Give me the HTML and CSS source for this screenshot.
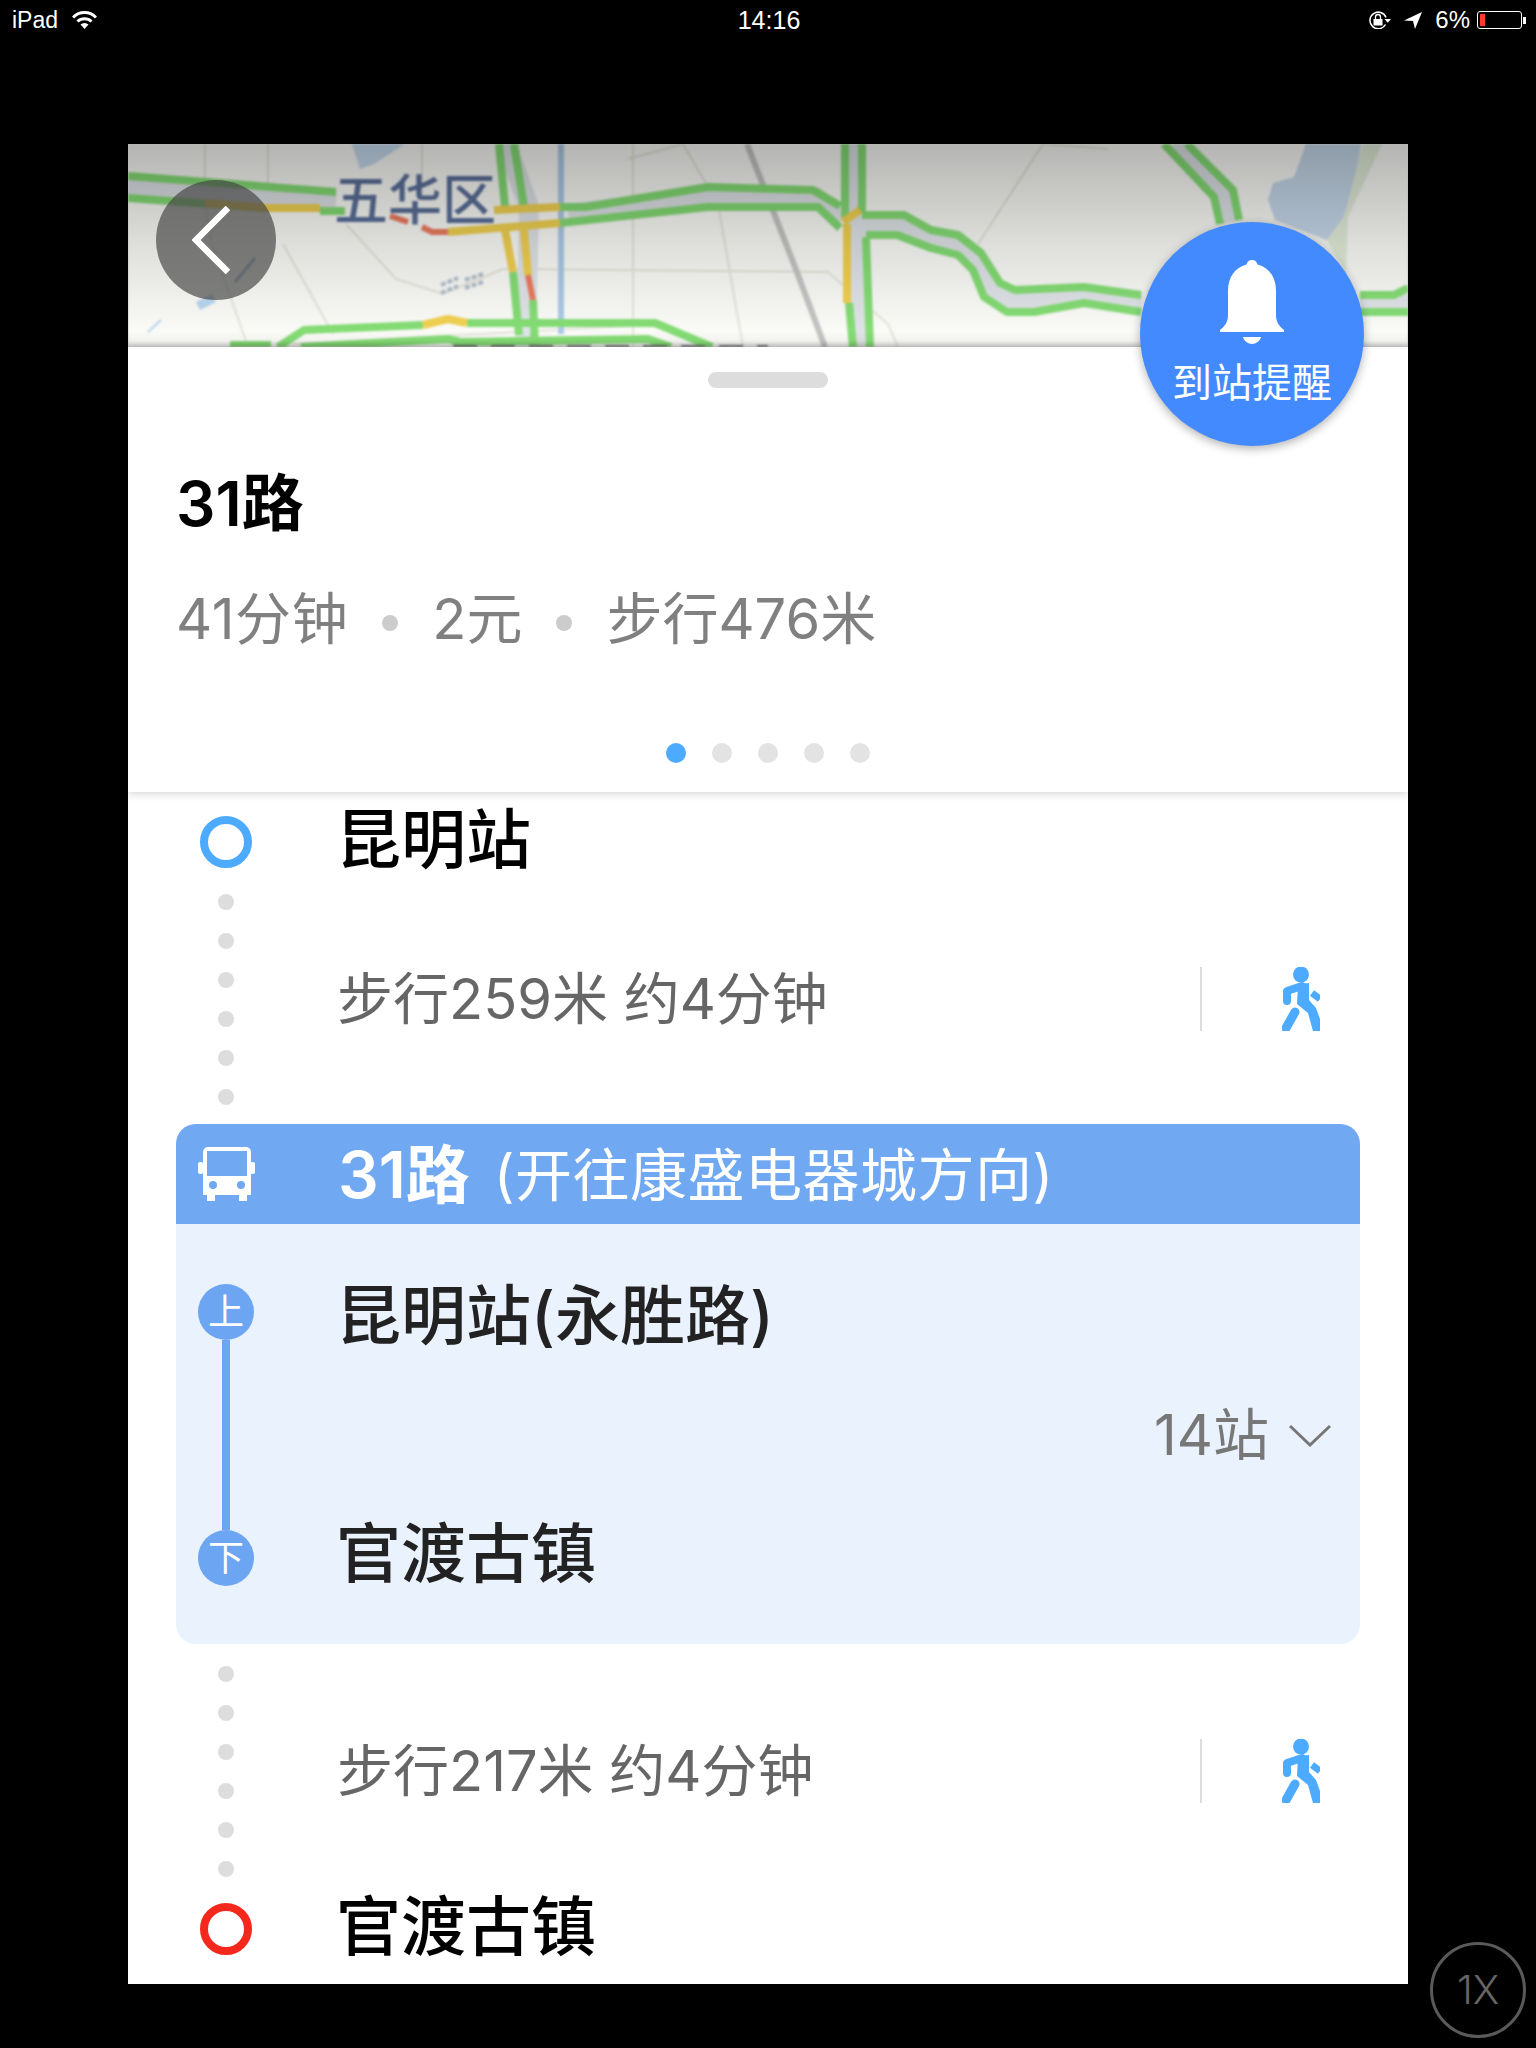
FILE: index.html
```html
<!DOCTYPE html>
<html lang="zh-CN">
<head>
    <meta charset="UTF-8">
    <meta name="viewport" content="width=device-width, initial-scale=1.0">
    <title>31路</title>
    <link rel="stylesheet" href="styles.css">
</head>
<body>
    <div class="status-bar">
        <div class="status-left">
            <span>iPad</span>
            <svg class="wifi-icon" width="25" height="18" viewBox="0 0 25 18">
                <path d="M1 6.500a16 16 0 0 1 23 0" fill="none" stroke="#fff" stroke-width="3"/>
                <path d="M5.500 10.500a10 10 0 0 1 14 0" fill="none" stroke="#fff" stroke-width="3"/>
                <path d="M8.500 13.500a6 6 0 0 1 8 0L12.500 18z" fill="#fff"/>
            </svg>
        </div>
        <div class="status-time">14:16</div>
        <div class="status-right">
            <svg width="22" height="18" viewBox="0 0 22 18">
                <path d="M16.500 13.500A8.300 8.300 0 1 1 17 6.500" fill="none" stroke="#fff" stroke-width="1.500"/>
                <path d="M15.500 8h6.500l-3.200 3.800z" fill="#fff"/>
                <rect x="4.500" y="8" width="9" height="6.500" fill="#fff"/>
                <path d="M6.500 8V6a2.500 2.500 0 0 1 5 0v2" fill="none" stroke="#fff" stroke-width="1.300"/>
            </svg>
            <svg class="arrow-icon" width="18" height="17" viewBox="0 0 18 17">
                <path d="M18 0L0 8.500l9 .5 2 8z" fill="#fff"/>
            </svg>
            <span class="battery-pct">6%</span>
            <div class="battery"><div class="battery-fill"></div></div>
            <div class="battery-nub"></div>
        </div>
    </div>

    <div class="screen">
        <div class="map">
            <svg class="map-svg" width="1280" height="203" viewBox="0 0 1280 203">
                <defs>
                    <linearGradient id="mapShade" x1="0" y1="0" x2="0" y2="1">
                        <stop offset="0" stop-color="#000" stop-opacity="0.28"/>
                        <stop offset="0.5" stop-color="#000" stop-opacity="0.11"/>
                        <stop offset="0.92" stop-color="#000" stop-opacity="0"/>
                        <stop offset="0.97" stop-color="#000" stop-opacity="0.03"/>
                        <stop offset="1" stop-color="#000" stop-opacity="0.22"/>
                    </linearGradient>
                </defs>
                <rect width="1280" height="203" fill="#fafaf7"/>

                <!-- water -->
                <path d="M1178 0H1233L1228 33L1216 73L1199 96L1147 76L1140 56L1145 39L1166 33z" fill="#c6d8ea"/>
                <path d="M1235 0H1254L1220 73L1218 129L1199 96L1216 73z" fill="#e2edd9"/>
                <path d="M224 0L232 25L246 20L277 0z" fill="#c6dbee"/>
                <path d="M68 158L84 150L88 158L72 166z" fill="#b8d6ee"/>
                <path d="M20 188L33 176" stroke="#b8d6ee" stroke-width="2" fill="none"/>
                <path d="M107 138L127 114" stroke="#7da2c4" stroke-width="2" fill="none"/>

                <!-- thin roads -->
                <g fill="none" stroke="#e4e4da" stroke-width="2">
                    <path d="M77 0V60L84 100L120 203"/>
                    <path d="M140 0V60"/>
                    <path d="M155 100L205 190"/>
                    <path d="M218 80L268 135L315 150L375 125L700 128L760 180L770 203"/>
                    <path d="M294 0V50"/>
                    <path d="M505 0V203"/>
                    <path d="M500 15L555 0L590 60L615 203"/>
                    <path d="M850 100L915 0L980 5"/>
                    <path d="M165 200L500 182"/>
                </g>

                <!-- rail -->
                <path d="M619 0L667 123L697 203" fill="none" stroke="#c4c4c4" stroke-width="6"/>
                <path d="M433 0V190" fill="none" stroke="#acc9e6" stroke-width="6"/>

                <!-- road beds -->
                <g fill="none" stroke="#dfe3e7" stroke-width="20">
                    <path d="M0 43L208 58"/>
                    <path d="M378 0L401 63L398 203"/>
                    <path d="M440 70L580 53L688 54L715 75"/>
                    <path d="M725 0L731 203"/>
                    <path d="M734 81L776 82L803 95L830 101L849 118L864 146L883 157L956 151L1013 160"/>
                    <path d="M1232 160H1280"/>
                    <path d="M1047 0L1095 50L1102 78"/>
                </g>

                <!-- green traffic -->
                <g fill="none" stroke="#84dc74" stroke-width="8" stroke-linejoin="round">
                    <path d="M0 32L208 48"/>
                    <path d="M0 54L139 64"/>
                    <path d="M192 67H217"/>
                    <path d="M371 0L377 63"/>
                    <path d="M386 0L396 63"/>
                    <path d="M385 128L391 191"/>
                    <path d="M405 156L407 203"/>
                    <path d="M432 63H458L580 43L685 46L712 62"/>
                    <path d="M432 79L580 63L690 63L712 84"/>
                    <path d="M717 0V73"/>
                    <path d="M721 159L725 203"/>
                    <path d="M734 0V70"/>
                    <path d="M738 93L742 203"/>
                    <path d="M734 71H776L803 86L830 91L853 109L872 139L887 146L956 143L1013 151"/>
                    <path d="M738 91H769L803 104L830 111L845 126L856 153L879 168H906L956 159L1013 168"/>
                    <path d="M1232 151H1266L1280 144"/>
                    <path d="M1232 168H1280"/>
                    <path d="M1036 0L1086 53L1092 80"/>
                    <path d="M1059 0L1105 46L1111 76"/>
                    <path d="M150 203L176 186L295 181"/>
                    <path d="M339 179H527L584 203"/>
                    <path d="M173 203L320 195L332 198L520 195L543 203"/>
                    <path d="M102 201H143"/>
                </g>

                <!-- yellow and red traffic -->
                <g fill="none" stroke="#f0d050" stroke-width="8" stroke-linejoin="round">
                    <path d="M77 59L139 64H192"/>
                    <path d="M366 66L432 63"/>
                    <path d="M320 88L432 79"/>
                    <path d="M377 86L385 128"/>
                    <path d="M396 86L400 131"/>
                    <path d="M719 80V159"/>
                    <path d="M715 78L732 66"/>
                    <path d="M295 181L320 175L339 179"/>
                </g>
                <g fill="none" stroke="#ec7c60" stroke-width="6">
                    <path d="M262 72L280 78"/>
                    <path d="M294 83L304 88H320"/>
                    <path d="M400 131L405 156"/>
                </g>

                <!-- labels -->
                <text class="map-label" x="206" y="76">五华区</text>
                <g fill="none" stroke="#b5c0cc" stroke-width="4" stroke-dasharray="5 2">
                    <path d="M313 141L330 134"/>
                    <path d="M313 149L330 142"/>
                    <path d="M337 136L355 130"/>
                    <path d="M337 144L355 138"/>
                </g>
                <path d="M325 202H640" stroke="#777" stroke-width="2" stroke-dasharray="24 14" fill="none"/>

                <rect width="1280" height="203" fill="url(#mapShade)"/>
            </svg>
        </div>

        <div class="back-btn">
            <svg width="38" height="68" viewBox="0 0 38 68">
                <path d="M36 2L4 34L36 66" fill="none" stroke="#fff" stroke-width="6.500"/>
            </svg>
        </div>

        <div class="remind-btn">
            <svg class="bell-icon" width="64" height="84" viewBox="0 0 64 84">
                <path d="M32 0c3 0 5 2 5.500 4.500C49 7.500 56 17 56 31v24c0 7 3 11 8 15v2H0v-2c5-4 8-8 8-15V31C8 17 15 7.500 26.500 4.500 27 2 29 0 32 0z" fill="#fff"/>
                <path d="M23 77h18c-1 4-5 7-9 7s-8-3-9-7z" fill="#fff"/>
            </svg>
            <div class="remind-text">到站提醒</div>
        </div>

        <div class="summary">
            <div class="handle"></div>
            <div class="route-name">31路</div>
            <div class="route-meta">
                <span class="meta-time">41分钟</span>
                <i class="meta-dot"></i>
                <span>2元</span>
                <i class="meta-dot"></i>
                <span>步行476米</span>
            </div>
            <div class="pager">
                <i class="page-dot active"></i>
                <i class="page-dot"></i>
                <i class="page-dot"></i>
                <i class="page-dot"></i>
                <i class="page-dot"></i>
            </div>
        </div>

        <div class="steps">
            <div class="stop first">
                <div class="rail"><i class="ring start"></i></div>
                <div class="stop-name">昆明站</div>
            </div>

            <div class="walk">
                <div class="rail dots">
                    <i></i><i></i><i></i><i></i><i></i><i></i>
                </div>
                <div class="walk-text">步行259米 约4分钟</div>
                <div class="walk-icon">
                    <svg width="38" height="64" viewBox="0 0 38 64">
                        <circle cx="19" cy="7.500" r="8" fill="#4dabff"/>
                        <path d="M16 17L27 16L27 33L34 41L38 52V64H31L26 46L15 37z" fill="#4dabff"/>
                        <path d="M20 19L5 24V34" fill="none" stroke="#4dabff" stroke-width="8" stroke-linecap="round" stroke-linejoin="round"/>
                        <path d="M30 26L38 32" fill="none" stroke="#4dabff" stroke-width="7"/>
                        <path d="M13 45L4 61" fill="none" stroke="#4dabff" stroke-width="9" stroke-linecap="round"/>
                    </svg>
                </div>
            </div>

            <div class="bus-card">
                <div class="bus-head">
                    <div class="rail">
                        <svg width="57" height="54" viewBox="0 0 57 54">
                            <path d="M10 0H48a5 5 0 0 1 5 5V48H49V54H41V48H17V54H9V48H5V5a5 5 0 0 1 5-5zM9 4V29H49V4zM15 34a4 4 0 1 0 0 8a4 4 0 1 0 0-8zM43 34a4 4 0 1 0 0 8a4 4 0 1 0 0-8z" fill="#fff" fill-rule="evenodd"/>
                            <rect x="0" y="15" width="5" height="12" rx="2" fill="#fff"/>
                            <rect x="52" y="15" width="5" height="12" rx="2" fill="#fff"/>
                        </svg>
                    </div>
                    <div class="bus-title"><b>31路</b><span>(开往康盛电器城方向)</span></div>
                </div>
                <div class="bus-body">
                    <div class="bus-rail">
                        <div class="bus-node">上</div>
                        <div class="bus-line"></div>
                        <div class="bus-node">下</div>
                    </div>
                    <div class="bus-stops">
                        <div class="stop-name dark">昆明站(永胜路)</div>
                        <div class="stop-count">
                            <span>14站</span>
                            <svg width="42" height="23" viewBox="0 0 42 23">
                                <path d="M1 2L21 21L41 2" fill="none" stroke="#777" stroke-width="3"/>
                            </svg>
                        </div>
                        <div class="stop-name dark">官渡古镇</div>
                    </div>
                </div>
            </div>

            <div class="walk">
                <div class="rail dots">
                    <i></i><i></i><i></i><i></i><i></i><i></i>
                </div>
                <div class="walk-text">步行217米 约4分钟</div>
                <div class="walk-icon">
                    <svg width="38" height="64" viewBox="0 0 38 64">
                        <circle cx="19" cy="7.500" r="8" fill="#4dabff"/>
                        <path d="M16 17L27 16L27 33L34 41L38 52V64H31L26 46L15 37z" fill="#4dabff"/>
                        <path d="M20 19L5 24V34" fill="none" stroke="#4dabff" stroke-width="8" stroke-linecap="round" stroke-linejoin="round"/>
                        <path d="M30 26L38 32" fill="none" stroke="#4dabff" stroke-width="7"/>
                        <path d="M13 45L4 61" fill="none" stroke="#4dabff" stroke-width="9" stroke-linecap="round"/>
                    </svg>
                </div>
            </div>

            <div class="stop">
                <div class="rail"><i class="ring end"></i></div>
                <div class="stop-name">官渡古镇</div>
            </div>
        </div>
    </div>

    <div class="speed-btn">1X</div>
</body>
</html>
```

FILE: styles.css
```css
* {
    box-sizing: border-box;
}
html, body {
    height: 2048px;
    overflow: hidden;
}
body {
    margin: 0;
    background-color: #000;
    font-family: Inter, "Noto Sans CJK SC", sans-serif;
    position: relative;
}
i {
    display: block;
}

/* status bar */
.status-bar {
    display: grid;
    grid-template-columns: 1fr auto 1fr;
    align-items: center;
    height: 40px;
    padding: 0 10px 0 12px;
    color: #fff;
    font-family: "Liberation Sans", sans-serif;
    font-size: 23px;
}
.status-left, .status-right {
    display: flex;
    align-items: center;
}
.wifi-icon {
    margin-left: 14px;
}
.status-time {
    font-size: 25px;
}
.status-right {
    justify-content: flex-end;
}
.arrow-icon {
    margin-left: 13px;
}
.battery-pct {
    margin-left: 13px;
    font-size: 24px;
}
.battery {
    width: 45px;
    height: 18px;
    margin-left: 7px;
    padding: 2px;
    border: 1px solid #fff;
    border-radius: 3px;
}
.battery-fill {
    width: 5px;
    height: 100%;
    background-color: #ff3b30;
}
.battery-nub {
    width: 3px;
    height: 7px;
    margin-left: 1px;
    background-color: #fff;
}

/* app screen */
.screen {
    position: relative;
    width: 1280px;
    height: 1840px;
    margin: 104px 0 0 128px;
    background-color: #fff;
    overflow: hidden;
}
.map {
    height: 203px;
    overflow: hidden;
    background-color: #bbb;
}
.map-svg {
    display: block;
    filter: blur(0.8px);
}
.map-label {
    font-size: 54px;
    font-weight: 500;
    fill: #5a6f98;
}
.back-btn {
    position: absolute;
    left: 28px;
    top: 36px;
    width: 120px;
    height: 120px;
    border-radius: 50%;
    background-color: rgba(70, 70, 70, 0.68);
    display: flex;
    align-items: center;
    justify-content: center;
    padding-right: 10px;
}
.remind-btn {
    position: absolute;
    left: 1012px;
    top: 78px;
    width: 224px;
    height: 224px;
    border-radius: 50%;
    background-color: #448aff;
    box-shadow: 0 3px 10px rgba(0, 0, 0, 0.3);
    display: flex;
    flex-direction: column;
    align-items: center;
    padding-top: 38px;
    z-index: 2;
}
.bell-icon {
    display: block;
}
.remind-text {
    margin-top: 15px;
    color: #fff;
    font-size: 40px;
    line-height: 48px;
}

/* route summary */
.summary {
    position: relative;
    height: 445px;
    padding: 25px 48px 0;
    background-color: #fff;
    box-shadow: 0 2px 8px rgba(0, 0, 0, 0.16);
}
.handle {
    width: 120px;
    height: 16px;
    margin: 0 auto;
    border-radius: 8px;
    background-color: #ddd;
}
.route-name {
    margin-top: 76px;
    font-size: 62px;
    font-weight: 600;
    line-height: 80px;
    color: #000;
}
.route-meta {
    display: flex;
    align-items: center;
    margin-top: 35px;
    font-size: 56px;
    line-height: 80px;
    color: #808080;
}
.meta-time {
    letter-spacing: 0.6px;
}
.meta-dot {
    width: 16px;
    height: 16px;
    margin: 8px 34px 0;
    border-radius: 50%;
    background-color: #ccc;
}
.pager {
    display: flex;
    justify-content: center;
    gap: 26px;
    margin-top: 84px;
}
.page-dot {
    width: 20px;
    height: 20px;
    border-radius: 50%;
    background-color: #e3e3e3;
}
.page-dot.active {
    background-color: #4dabff;
}

/* steps */
.steps {
    padding: 16px 48px 0;
}
.rail {
    flex: none;
    width: 100px;
    display: flex;
    align-items: center;
    justify-content: center;
}
.stop {
    display: flex;
    align-items: center;
    height: 68px;
}
.ring {
    width: 52px;
    height: 52px;
    border-radius: 50%;
    border: 8px solid #4dabff;
}
.ring.end {
    border-color: #f5281e;
}
.stop-name {
    margin-left: 60px;
    font-size: 65px;
    font-weight: 500;
    line-height: 64px;
    color: #000;
    position: relative;
    top: -2px;
}
.stop-name.dark {
    margin-left: 0;
    top: 0;
    color: #222;
}
.walk {
    display: flex;
    align-items: center;
    height: 248px;
    padding-bottom: 2px;
}
.bus-card + .walk {
    margin-top: 3px;
    padding-bottom: 0;
}
.dots {
    flex-direction: column;
    gap: 23px;
}
.dots i {
    width: 16px;
    height: 16px;
    border-radius: 50%;
    background-color: #ddd;
}
.walk-text {
    flex: 1;
    margin-left: 61px;
    font-size: 56px;
    line-height: 64px;
    color: #666;
}
.walk-icon {
    display: flex;
    justify-content: flex-end;
    width: 120px;
    height: 64px;
    margin-right: 40px;
    border-left: 2px solid #ddd;
}

/* bus card */
.bus-card {
    border-radius: 20px;
    overflow: hidden;
    background-color: #eaf2fd;
}
.bus-head {
    display: flex;
    align-items: center;
    height: 100px;
    background-color: #70a8f2;
    color: #fff;
}
.bus-title {
    margin-left: 62px;
    font-size: 57px;
    line-height: 64px;
}
.bus-title b {
    position: relative;
    top: 2px;
    font-size: 64px;
    font-weight: 600;
}
.bus-title span {
    margin-left: 24px;
    letter-spacing: 0.5px;
}
.bus-body {
    display: flex;
    height: 420px;
    padding: 60px 0 58px;
}
.bus-rail {
    flex: none;
    width: 100px;
    display: flex;
    flex-direction: column;
    align-items: center;
}
.bus-node {
    width: 56px;
    height: 56px;
    border-radius: 50%;
    background-color: #6ca5f2;
    color: #fff;
    font-size: 36px;
    line-height: 56px;
    text-align: center;
}
.bus-line {
    flex: 1;
    width: 8px;
    background-color: #6ca5f2;
}
.bus-stops {
    flex: 1;
    display: flex;
    flex-direction: column;
    justify-content: space-between;
    padding: 0 29px 0 60px;
}
.stop-count {
    display: flex;
    align-items: center;
    justify-content: flex-end;
    gap: 20px;
    font-size: 56px;
    line-height: 64px;
    color: #777;
}

/* floating speed button */
.speed-btn {
    position: absolute;
    left: 1430px;
    top: 1942px;
    width: 96px;
    height: 96px;
    border: 3px solid #5a5a5a;
    border-radius: 50%;
    color: #666;
    font-family: Inter, sans-serif;
    font-size: 40px;
    font-weight: 300;
    line-height: 90px;
    text-align: center;
}
```
